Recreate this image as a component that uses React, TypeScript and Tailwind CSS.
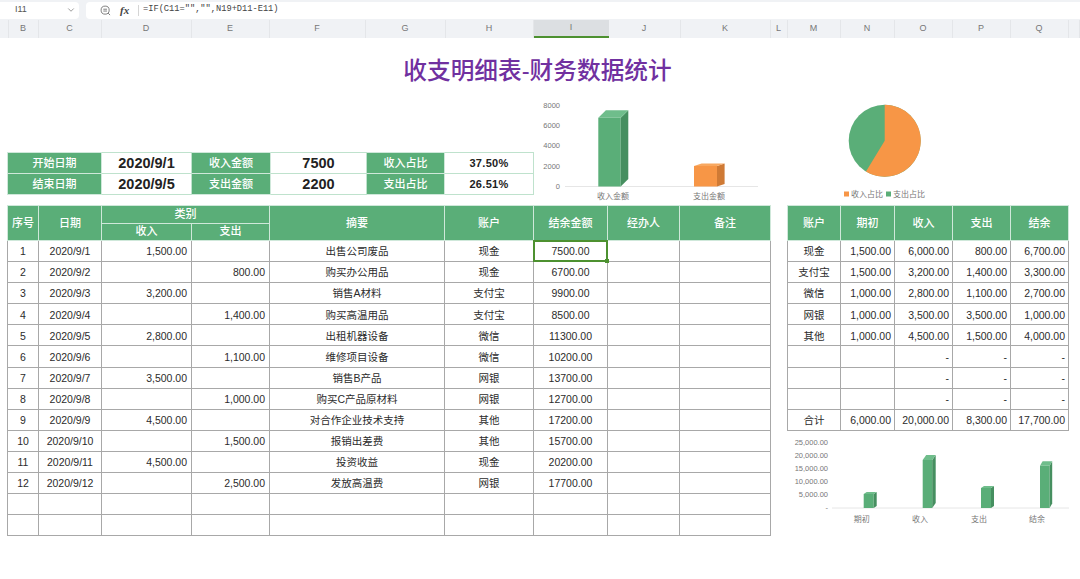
import { ChevronDown } from "lucide-react";

const COLUMNS = [
  { label: "", width: 8.5 },
  { label: "B", width: 30 },
  { label: "C", width: 63 },
  { label: "D", width: 90 },
  { label: "E", width: 78 },
  { label: "F", width: 96 },
  { label: "G", width: 80 },
  { label: "H", width: 88 },
  { label: "I", width: 75, active: true },
  { label: "J", width: 72 },
  { label: "K", width: 90 },
  { label: "L", width: 17 },
  { label: "M", width: 53 },
  { label: "N", width: 54 },
  { label: "O", width: 58 },
  { label: "P", width: 58 },
  { label: "Q", width: 58 },
  { label: "", width: 11.5 },
];

const ROWS = [
  ["1", "2020/9/1", "1,500.00", "", "出售公司废品", "现金", "7500.00"],
  ["2", "2020/9/2", "", "800.00", "购买办公用品", "现金", "6700.00"],
  ["3", "2020/9/3", "3,200.00", "", "销售A材料", "支付宝", "9900.00"],
  ["4", "2020/9/4", "", "1,400.00", "购买高温用品", "支付宝", "8500.00"],
  ["5", "2020/9/5", "2,800.00", "", "出租机器设备", "微信", "11300.00"],
  ["6", "2020/9/6", "", "1,100.00", "维修项目设备", "微信", "10200.00"],
  ["7", "2020/9/7", "3,500.00", "", "销售B产品", "网银", "13700.00"],
  ["8", "2020/9/8", "", "1,000.00", "购买C产品原材料", "网银", "12700.00"],
  ["9", "2020/9/9", "4,500.00", "", "对合作企业技术支持", "其他", "17200.00"],
  ["10", "2020/9/10", "", "1,500.00", "报销出差费", "其他", "15700.00"],
  ["11", "2020/9/11", "4,500.00", "", "投资收益", "现金", "20200.00"],
  ["12", "2020/9/12", "", "2,500.00", "发放高温费", "网银", "17700.00"],
  ["", "", "", "", "", "", ""],
  ["", "", "", "", "", "", ""],
];

const ACCOUNTS = [
  ["现金", "1,500.00", "6,000.00", "800.00", "6,700.00"],
  ["支付宝", "1,500.00", "3,200.00", "1,400.00", "3,300.00"],
  ["微信", "1,000.00", "2,800.00", "1,100.00", "2,700.00"],
  ["网银", "1,000.00", "3,500.00", "3,500.00", "1,000.00"],
  ["其他", "1,000.00", "4,500.00", "1,500.00", "4,000.00"],
  ["", "", "-", "-", "-"],
  ["", "", "-", "-", "-"],
  ["", "", "-", "-", "-"],
  ["合计", "6,000.00", "20,000.00", "8,300.00", "17,700.00"],
];

const SUMMARY = [
  ["开始日期", "2020/9/1", "收入金额", "7500", "收入占比", "37.50%"],
  ["结束日期", "2020/9/5", "支出金额", "2200", "支出占比", "26.51%"],
];

const head = "border border-[#cfe8da] bg-[#5aae78] p-0 text-center align-middle text-[11px] leading-none font-medium text-white";
const cell = "border border-[#a8a8a8] p-0 pt-[1px] text-center align-middle text-[10.5px] leading-none text-[#2b2b2b]";
const num = "border border-[#a8a8a8] p-0 pt-[1px] pr-1 text-right align-middle text-[10.5px] leading-none text-[#2b2b2b]";
const big = "border border-[#bfe2cd] p-0 text-center align-middle text-[14.5px] leading-none font-bold text-[#222]";

function Bar3D({ x, w, top, bottom, dx, dy, front, side, roof }: {
  x: number; w: number; top: number; bottom: number; dx: number; dy: number;
  front: string; side: string; roof: string;
}) {
  return (
    <g>
      <rect x={x} y={top} width={w} height={bottom - top} fill={front} />
      <polygon points={`${x + w},${top} ${x + w + dx},${top - dy} ${x + w + dx},${bottom - dy} ${x + w},${bottom}`} fill={side} />
      <polygon points={`${x},${top} ${x + dx},${top - dy} ${x + w + dx},${top - dy} ${x + w},${top}`} fill={roof} />
    </g>
  );
}

function SummaryTable() {
  return (
    <table className="w-[526px] table-fixed border-collapse">
      <colgroup>
        <col className="w-[94px]" />
        <col className="w-[90px]" />
        <col className="w-[79px]" />
        <col className="w-[96px]" />
        <col className="w-[78px]" />
        <col className="w-[89px]" />
      </colgroup>
      <tbody>
        {SUMMARY.map((row) => (
          <tr key={row[0]} className="h-[21px]">
            <td className={head}>{row[0]}</td>
            <td className={big}>{row[1]}</td>
            <td className={head}>{row[2]}</td>
            <td className={big}>{row[3]}</td>
            <td className={head}>{row[4]}</td>
            <td className="border border-[#bfe2cd] p-0 text-center align-middle text-[11px] leading-none font-bold tracking-[0.3px] text-[#222]">{row[5]}</td>
          </tr>
        ))}
      </tbody>
    </table>
  );
}

function DetailTable() {
  return (
    <table className="w-[763px] table-fixed border-collapse">
      <colgroup>
        <col className="w-[31px]" />
        <col className="w-[63px]" />
        <col className="w-[90px]" />
        <col className="w-[78px]" />
        <col className="w-[175px]" />
        <col className="w-[89px]" />
        <col className="w-[74px]" />
        <col className="w-[72px]" />
        <col className="w-[91px]" />
      </colgroup>
      <thead>
        <tr className="h-[17.5px]">
          <th rowSpan={2} className={head}>序号</th>
          <th rowSpan={2} className={head}>日期</th>
          <th colSpan={2} className={head}>类别</th>
          <th rowSpan={2} className={head}>摘要</th>
          <th rowSpan={2} className={head}>账户</th>
          <th rowSpan={2} className={head}>结余金额</th>
          <th rowSpan={2} className={head}>经办人</th>
          <th rowSpan={2} className={head}>备注</th>
        </tr>
        <tr className="h-[17.5px]">
          <th className={head}>收入</th>
          <th className={head}>支出</th>
        </tr>
      </thead>
      <tbody>
        {ROWS.map((row, i) => (
          <tr key={i} className="h-[21.1px]">
            <td className={cell}>{row[0]}</td>
            <td className={cell}>{row[1]}</td>
            <td className={num}>{row[2]}</td>
            <td className={num}>{row[3]}</td>
            <td className={cell}>{row[4]}</td>
            <td className={cell}>{row[5]}</td>
            <td className={`${cell} relative`}>
              {row[6]}
              {i === 0 && (
                <span className="absolute -inset-px border-2 border-[#4d9130]">
                  <span className="absolute -right-[3px] -bottom-[3px] h-[4px] w-[4px] bg-[#4d9130]" />
                </span>
              )}
            </td>
            <td className={cell} />
            <td className={cell} />
          </tr>
        ))}
      </tbody>
    </table>
  );
}

function AccountTable() {
  return (
    <table className="w-[281px] table-fixed border-collapse">
      <colgroup>
        <col className="w-[53px]" />
        <col className="w-[54px]" />
        <col className="w-[58px]" />
        <col className="w-[58px]" />
        <col className="w-[58px]" />
      </colgroup>
      <thead>
        <tr className="h-[35px]">
          {["账户", "期初", "收入", "支出", "结余"].map((h) => (
            <th key={h} className={head}>{h}</th>
          ))}
        </tr>
      </thead>
      <tbody>
        {ACCOUNTS.map((row, i) => (
          <tr key={i} className="h-[21.1px]">
            <td className={cell}>{row[0]}</td>
            {row.slice(1).map((v, j) => (
              <td key={j} className={`${num} pr-[3px]`}>{v}</td>
            ))}
          </tr>
        ))}
      </tbody>
    </table>
  );
}

export default function App() {
  return (
    <div className="flex h-[579px] w-[1080px] flex-col overflow-hidden bg-white font-['Liberation_Sans','Noto_Sans_CJK_SC',sans-serif]">
      {/* formula bar */}
      <div className="flex h-[20px] shrink-0 items-center gap-[7px] bg-[#f0f2f5] pt-[1px] pb-[1px]">
        <div className="flex h-[17px] w-[79px] items-center justify-between rounded-r-[4px] bg-white pr-[3px] pl-[15px] text-[9px] text-[#555]">
          <span>I11</span>
          <ChevronDown className="h-[10px] w-[10px] text-[#888]" />
        </div>
        <div className="flex h-[17px] flex-1 items-center rounded-l-[4px] bg-white pl-[14px]">
          <svg viewBox="0 0 12 12" className="h-[11px] w-[11px]" fill="none" stroke="#666" strokeWidth="0.9">
            <circle cx="5.6" cy="5.6" r="4.4" />
            <path d="M3.6 4.6h4M3.6 6.6h4M8.8 8.8l2.2 2.2" />
          </svg>
          <span className="ml-[9px] w-[17px] font-['Liberation_Serif'] text-[11px] font-bold text-[#444] italic">fx</span>
          <span className="ml-[1px] h-[11px] w-px bg-[#d5d5d5]" />
          <span className="ml-[4px] font-['Liberation_Mono'] text-[8.7px] text-[#444]">=IF(C11="","",N19+D11-E11)</span>
        </div>
      </div>

      {/* column letters */}
      <div className="flex h-[18px] shrink-0 bg-[#f0f2f5]">
        {COLUMNS.map((c, i) => (
          <div
            key={i}
            style={{ width: c.width }}
            className={
              c.active
                ? "flex items-center justify-center border-b-2 border-[#4d9130] bg-[#dcdfe2] text-[9px] text-[#777]"
                : "flex items-center justify-center border-r border-[#e4e6e9] text-[9px] text-[#777]"
            }
          >
            {c.label}
          </div>
        ))}
      </div>

      {/* title */}
      <div className="flex h-[57px] shrink-0 items-center justify-center pt-[10px] pr-[5px]">
        <h1 className="text-[23.7px] leading-none font-medium text-[#7030a0]">收支明细表-财务数据统计</h1>
      </div>

      {/* summary and charts */}
      <div className="flex h-[110px] shrink-0">
        <div className="ml-[7px] w-[526px] pt-[57px]">
          <SummaryTable />
        </div>
        <svg viewBox="533 95 237 110" className="h-[110px] w-[237px]">
          <g fontSize="7.5" fill="#777" textAnchor="end">
            <text x="560" y="107.5">8000</text>
            <text x="560" y="128">6000</text>
            <text x="560" y="148">4000</text>
            <text x="560" y="168.5">2000</text>
            <text x="560" y="189">0</text>
          </g>
          <line x1="565" x2="758" y1="186.5" y2="186.5" stroke="#e6e6e6" />
          <Bar3D x={598.3} w={22.4} top={117.7} bottom={186.5} dx={7.6} dy={7.5} front="#5aae78" side="#468f60" roof="#6fbd8b" />
          <Bar3D x={694} w={23} top={166} bottom={186.5} dx={7.6} dy={2.5} front="#f79646" side="#cf7a35" roof="#f8a860" />
          <g fontSize="8" fill="#777" textAnchor="middle">
            <text x="613" y="199">收入金额</text>
            <text x="709" y="199">支出金额</text>
          </g>
        </svg>
        <div className="w-[17px]" />
        <svg viewBox="787 95 281 110" className="h-[110px] w-[281px]">
          <circle cx="884.7" cy="140.7" r="36" fill="#5aae78" />
          <path d="M884.7 140.7V104.7A36 36 0 1 1 866 171.4Z" fill="#f79646" />
          <rect x="844" y="191.5" width="5" height="5" fill="#f79646" />
          <text x="851" y="197" fontSize="8" fill="#777">收入占比</text>
          <rect x="886" y="191.5" width="5" height="5" fill="#5aae78" />
          <text x="893" y="197" fontSize="8" fill="#777">支出占比</text>
        </svg>
      </div>

      {/* tables */}
      <div className="flex items-start">
        <div className="ml-[7px] w-[763px]">
          <DetailTable />
        </div>
        <div className="ml-[17px] w-[281px]">
          <AccountTable />
          <svg viewBox="787 431 293 100" className="h-[100px] w-[293px]">
            <g fontSize="7.5" fill="#777" textAnchor="end">
              <text x="828" y="444.5">25,000.00</text>
              <text x="828" y="457.5">20,000.00</text>
              <text x="828" y="470.5">15,000.00</text>
              <text x="828" y="484">10,000.00</text>
              <text x="828" y="497">5,000.00</text>
              <text x="828" y="510">-</text>
            </g>
            <line x1="832" x2="1069" y1="508" y2="508" stroke="#e6e6e6" />
            <Bar3D x={863.7} w={10} top={494} bottom={508} dx={3} dy={2} front="#5aae78" side="#468f60" roof="#6fbd8b" />
            <Bar3D x={922.7} w={9.5} top={460} bottom={508} dx={3.5} dy={5} front="#5aae78" side="#468f60" roof="#6fbd8b" />
            <Bar3D x={981} w={10} top={488} bottom={508} dx={3} dy={2} front="#5aae78" side="#468f60" roof="#6fbd8b" />
            <Bar3D x={1040} w={9.6} top={465.7} bottom={508} dx={2.6} dy={4.5} front="#5aae78" side="#468f60" roof="#6fbd8b" />
            <g fontSize="8" fill="#777" textAnchor="middle">
              <text x="861.7" y="522">期初</text>
              <text x="920" y="522">收入</text>
              <text x="979" y="522">支出</text>
              <text x="1037" y="522">结余</text>
            </g>
          </svg>
        </div>
      </div>
    </div>
  );
}
